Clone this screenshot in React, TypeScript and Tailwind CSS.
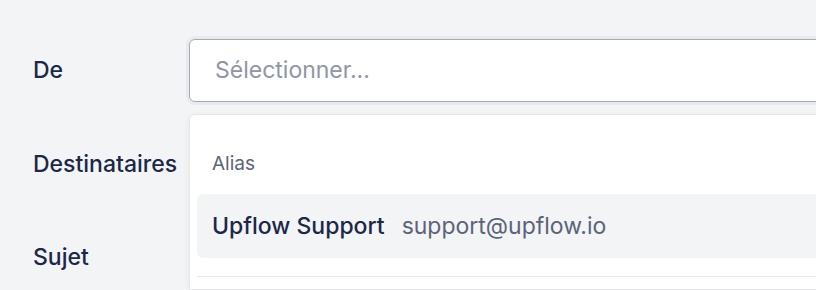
import React from "react";

const Label = ({ children, className = "" }: { children: React.ReactNode; className?: string }) => (
  <span className={`text-[23px] font-medium leading-[28px] text-[#1b2847] ${className}`}>{children}</span>
);

export default function App() {
  return (
    <div className="flex h-[290px] w-[816px] overflow-hidden bg-[#f3f4f6] font-['Inter',sans-serif]">
      <div className="flex w-[189px] shrink-0 flex-col pl-[33px]">
        <Label className="mt-[56px]">De</Label>
        <Label className="mt-[66px]">Destinataires</Label>
        <Label className="mt-[65px]">Sujet</Label>
      </div>
      <div className="flex w-[700px] shrink-0 flex-col pt-[39px]">
        <div className="flex h-[63px] items-center rounded-md border border-[#a3aab7] bg-white px-[25px] shadow-[0_0_0_3px_#e8eaee]">
          <span className="text-[23px] text-[#8f96a5]">Sélectionner...</span>
        </div>
        <div className="mt-[12px] flex-1 rounded-t-md border border-[#e6e8ec] bg-white px-[7px] shadow-[-2px_0_4px_rgba(0,0,0,0.03)]">
          <div className="px-[15px] pt-[37px] text-[19px] leading-[24px] text-[#5b6478]">Alias</div>
          <div className="mt-[18px] flex h-[64px] items-center gap-[17px] rounded-md bg-[#f3f4f6] px-[15px] text-[23px]">
            <span className="font-medium text-[#1b2847]">Upflow Support</span>
            <span className="text-[#5b6478]">support@upflow.io</span>
          </div>
          <div className="mt-[18px] border-t border-[#e6e8ec]" />
        </div>
      </div>
    </div>
  );
}
